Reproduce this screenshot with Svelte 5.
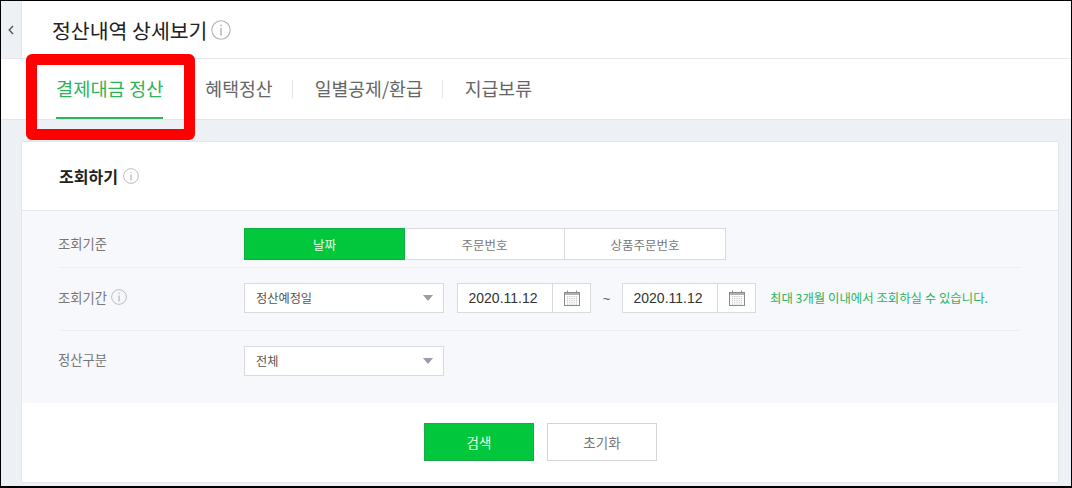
<script>
  const tabs = ['결제대금 정산', '혜택정산', '일별공제/환급', '지급보류'];
  const criteria = ['날짜', '주문번호', '상품주문번호'];
  const dates = ['2020.11.12', '2020.11.12'];
  const cells = [0, 1, 2, 3, 4];
</script>

{#snippet info(size)}
  <svg class="info" width={size} height={size} viewBox="0 0 20 20" aria-hidden="true">
    <circle cx="10" cy="10" r="9.2" fill="none" stroke="#b4b4b4" stroke-width="1.1" />
    <rect x="9.4" y="4.6" width="1.3" height="1.6" fill="#a8a8a8" />
    <rect x="9.4" y="8" width="1.3" height="7.6" fill="#a8a8a8" />
  </svg>
{/snippet}

{#snippet caret()}
  <svg class="caret" width="10" height="6" viewBox="0 0 10 6" aria-hidden="true">
    <path d="M0 0H10L5 6Z" fill="#9a9ca6" />
  </svg>
{/snippet}

{#snippet calendar()}
  <svg width="16" height="16" viewBox="0 0 16 16" aria-hidden="true">
    <rect x="0.5" y="2.5" width="15" height="13" fill="#fff" stroke="#8b8b8b" />
    <rect x="3" y="0.5" width="1" height="3" fill="#8b8b8b" />
    <rect x="12" y="0.5" width="1" height="3" fill="#8b8b8b" />
    <rect x="1" y="3" width="14" height="2" fill="#b0b0b0" />
    {#each cells as r}
      {#each cells as c}
        <rect x={3 + c * 2.2} y={6 + r * 1.9} width="1.2" height="1" fill="#c4c4c4" />
      {/each}
    {/each}
  </svg>
{/snippet}

<div class="frame">
  <header class="top">
    <button class="toggle" aria-label="접기">
      <svg width="6" height="10" viewBox="0 0 6 10" aria-hidden="true">
        <path d="M5 1L1.2 5L5 9" fill="none" stroke="#555" stroke-width="1.4" />
      </svg>
    </button>
    <h1>정산내역 상세보기</h1>
    {@render info(20)}
  </header>

  <nav class="tabs">
    {#each tabs as tab, i}
      <span class="tab" class:active={i === 0}>{tab}</span>
    {/each}
  </nav>

  <main class="content">
    <section class="card">
      <div class="card-head">
        <h2>조회하기</h2>
        {@render info(16)}
      </div>

      <div class="panel">
        <div class="row first">
          <span class="label">조회기준</span>
          <div class="segments">
            {#each criteria as item, i}
              <span class="seg" class:on={i === 0}>{item}</span>
            {/each}
          </div>
        </div>

        <div class="row mid">
          <span class="label">조회기간 {@render info(16)}</span>
          <div class="select">정산예정일 {@render caret()}</div>
          <div class="date first-date">
            <span class="value">{dates[0]}</span>
            <span class="cal">{@render calendar()}</span>
          </div>
          <span class="tilde">~</span>
          <div class="date">
            <span class="value">{dates[1]}</span>
            <span class="cal">{@render calendar()}</span>
          </div>
          <span class="note">최대 3개월 이내에서 조회하실 수 있습니다.</span>
        </div>

        <div class="row last">
          <span class="label">정산구분</span>
          <div class="select">전체 {@render caret()}</div>
        </div>
      </div>

      <div class="actions">
        <button class="btn primary">검색</button>
        <button class="btn">초기화</button>
      </div>
    </section>
  </main>

  <div class="highlight"></div>
</div>

<style>
  :global(body) {
    margin: 0;
    background: #fff;
  }

  .frame {
    position: relative;
    width: 1072px;
    height: 488px;
    box-sizing: border-box;
    border: 1px solid #000;
    border-bottom-width: 2px;
    overflow: hidden;
    font-family: "Noto Sans CJK KR", "Noto Sans", sans-serif;
    color: #333;
    background: #edf0f4;
    display: flex;
    flex-direction: column;
  }

  .top {
    height: 58px;
    box-sizing: border-box;
    flex: none;
    display: flex;
    align-items: center;
    background: #fff;
    border-bottom: 1px solid #e6e8eb;
  }
  .toggle {
    width: 21px;
    height: 100%;
    padding: 0;
    border: 0;
    border-right: 1px solid #e2e5e9;
    background: #edf0f4;
    display: flex;
    align-items: center;
    justify-content: center;
  }
  .top h1 {
    margin: 0 4px 0 30px;
    font-size: 20.5px;
    font-weight: 400;
    color: #222;
    line-height: 26px;
  }
  .info {
    flex: none;
    vertical-align: middle;
  }

  .tabs {
    height: 61px;
    box-sizing: border-box;
    flex: none;
    display: flex;
    align-items: stretch;
    background: #fff;
    border-bottom: 1px solid #e4e6ea;
    padding-left: 55px;
  }
  .tab {
    display: flex;
    align-items: center;
    position: relative;
    font-size: 18.3px;
    color: #666;
    margin-right: 42px;
    padding-bottom: 3px;
    box-sizing: border-box;
  }
  .tab + .tab::before {
    content: "";
    position: absolute;
    left: -23px;
    top: 21px;
    width: 1px;
    height: 18px;
    background: #e4e4e4;
  }
  .tab.active {
    font-size: 18.7px;
    color: #2db35a;
    border-bottom: 2px solid #2db35a;
    padding-bottom: 1px;
  }
  .tab.active + .tab::before {
    display: none;
  }

  .content {
    flex: 1;
    padding: 22px 13px 4px 21px;
    min-height: 0;
    display: flex;
  }
  .card {
    flex: 1;
    background: #fff;
    display: flex;
    flex-direction: column;
    box-shadow: 0 0 0 1px #e4e6ea;
  }
  .card-head {
    height: 68px;
    flex: none;
    display: flex;
    align-items: center;
    gap: 5px;
    padding-left: 37px;
    border-bottom: 1px solid #e4e6ea;
  }
  .card-head h2 {
    margin: 0;
    font-size: 16px;
    font-weight: 700;
    color: #222;
  }

  .panel {
    height: 192px;
    flex: none;
    padding: 0 37px;
    background: #f6f8fb;
  }
  .row {
    display: flex;
    align-items: center;
    height: 63px;
    box-sizing: border-box;
    border-bottom: 1px solid #eceef1;
    width: 962px;
  }
  .row.first {
    height: 57px;
    padding-top: 16px;
    padding-bottom: 6px;
  }
  .row.mid {
    padding-bottom: 2px;
  }
  .row.last {
    border-bottom: 0;
    height: 61px;
    padding-bottom: 2px;
  }
  .label {
    width: 186px;
    margin-left: -1px;
    flex: none;
    font-size: 13.3px;
    color: #777;
    display: flex;
    align-items: center;
    gap: 4px;
    margin-bottom: 2px;
  }

  .segments {
    display: grid;
    grid-template-columns: 161px 160px 161px;
    height: 32px;
  }
  .seg {
    display: flex;
    align-items: center;
    justify-content: center;
    font-size: 12.5px;
    color: #777;
    background: #fff;
    border: 1px solid #d8dadf;
    border-left: 0;
    box-sizing: border-box;
  }
  .seg.on {
    background: #00c73c;
    border: 1px solid #0fb043;
    color: #e8ffe8;
  }

  .select {
    width: 200px;
    height: 30px;
    flex: none;
    box-sizing: border-box;
    display: flex;
    align-items: center;
    justify-content: space-between;
    padding: 0 10px 0 11px;
    font-size: 12.2px;
    color: #555;
    background: #fff;
    border: 1px solid #d8dadf;
  }

  .date {
    display: flex;
    width: 134px;
    height: 30px;
    flex: none;
    box-sizing: border-box;
    background: #fff;
    border: 1px solid #d8dadf;
  }
  .first-date {
    margin-left: 13px;
  }
  .value {
    flex: 1;
    display: flex;
    align-items: center;
    justify-content: center;
    padding-right: 4px;
    font-family: "Liberation Sans", Arial, sans-serif;
    font-size: 14px;
    color: #333;
  }
  .cal {
    width: 38px;
    flex: none;
    box-sizing: border-box;
    border-left: 1px solid #d8dadf;
    display: flex;
    align-items: center;
    justify-content: center;
  }
  .tilde {
    width: 31px;
    flex: none;
    text-align: center;
    font-family: "Liberation Sans", Arial, sans-serif;
    font-size: 13px;
    color: #555;
  }
  .note {
    margin-left: 14px;
    font-size: 12.4px;
    color: #2db35a;
    white-space: nowrap;
  }

  .actions {
    flex: 1;
    display: flex;
    justify-content: center;
    gap: 13px;
    padding-top: 20px;
    padding-left: 1px;
  }
  .btn {
    width: 110px;
    height: 38px;
    box-sizing: border-box;
    font-family: inherit;
    font-size: 13.5px;
    color: #777;
    background: #fff;
    border: 1px solid #d4d4d4;
    padding: 0;
  }
  .btn.primary {
    background: #00c73c;
    border-color: #1aa84a;
    color: #e8ffe8;
  }

  .highlight {
    position: absolute;
    left: 25px;
    top: 53px;
    width: 169px;
    height: 86px;
    box-sizing: border-box;
    border: 11px solid #fe0000;
    border-radius: 6px;
  }
</style>
